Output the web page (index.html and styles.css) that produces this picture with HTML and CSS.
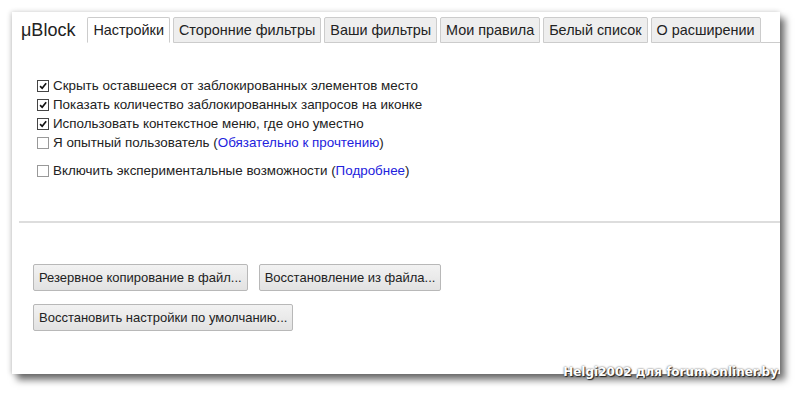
FILE: index.html
```html
<!DOCTYPE html>
<html lang="ru">
<head>
    <meta charset="UTF-8">
    <title>μBlock — Настройки</title>
    <link rel="stylesheet" href="styles.css">
</head>
<body>
    <div class="window">
        <div class="tabs">
            <span class="logo">μBlock</span>
            <span class="tab active">Настройки</span>
            <span class="tab">Сторонние фильтры</span>
            <span class="tab">Ваши фильтры</span>
            <span class="tab">Мои правила</span>
            <span class="tab">Белый список</span>
            <span class="tab">О расширении</span>
            <span class="tab-fill"></span>
        </div>

        <ul class="options">
            <li><span class="box checked"><svg viewBox="0 0 12 12"><path d="M2.5 6.2 L5 8.8 L9.8 2.6" /></svg></span>Скрыть оставшееся от заблокированных элементов место</li>
            <li><span class="box checked"><svg viewBox="0 0 12 12"><path d="M2.5 6.2 L5 8.8 L9.8 2.6" /></svg></span>Показать количество заблокированных запросов на иконке</li>
            <li><span class="box checked"><svg viewBox="0 0 12 12"><path d="M2.5 6.2 L5 8.8 L9.8 2.6" /></svg></span>Использовать контекстное меню, где оно уместно</li>
            <li><span class="box"></span>Я опытный пользователь (<a href="#">Обязательно к прочтению</a>)</li>
            <li class="spaced"><span class="box"></span>Включить экспериментальные возможности (<a href="#">Подробнее</a>)</li>
        </ul>

        <hr class="sep">

        <div class="buttons">
            <div class="btn-row">
                <button class="btn">Резервное копирование в файл...</button>
                <button class="btn">Восстановление из файла...</button>
            </div>
            <div class="btn-row">
                <button class="btn">Восстановить настройки по умолчанию...</button>
            </div>
        </div>

        <div class="watermark">Helgi2002 для forum.onliner.by</div>
    </div>
</body>
</html>
```

FILE: styles.css
```css
/* Окно настроек */
* {
    margin: 0;
    padding: 0;
    box-sizing: border-box;
}
html, body {
    height: 393px;
    overflow: hidden;
}
body {
    background: #fff;
    font-family: 'Liberation Sans', Arial, sans-serif;
    color: #222;
    padding: 12px 0 0 12px;
}
.window {
    position: relative;
    width: 768px;
    height: 362px;
    background: #fff;
    box-shadow: 5px 6px 7px rgba(0, 0, 0, 0.55), -1px 0 5px rgba(0, 0, 0, 0.2);
}

/* Вкладки */
.tabs {
    display: flex;
    align-items: flex-end;
    padding-top: 5px;
}
.logo {
    font-size: 18px;
    color: #222;
    padding: 0 12px 0 9px;
    line-height: 26px;
    height: 26px;
}
.tab {
    font-size: 14.4px;
    line-height: 24px;
    height: 26px;
    padding: 0 5px;
    margin-right: 3px;
    background: #eee;
    border: 1px solid #ccc;
    border-radius: 2px 2px 0 0;
    color: #222;
}
.tab.active {
    background: #fff;
    border-bottom-color: #fff;
}
.tab-fill {
    flex: 1;
    border-bottom: 1px solid #ccc;
    margin-left: -3px;
}

/* Опции */
.options {
    list-style: none;
    padding: 33px 0 0 25px;
    font-size: 13.4px;
    line-height: 19px;
}
.options li {
    display: flex;
    align-items: center;
}
.options li.spaced {
    margin-top: 9px;
}
.box {
    width: 12px;
    height: 12px;
    border: 1px solid #999;
    margin-right: 4px;
    background: #fff;
    display: inline-block;
}
.box.checked {
    border-color: #444;
}
.box svg {
    display: block;
    width: 10px;
    height: 10px;
    fill: none;
    stroke: #111;
    stroke-width: 2;
}
.options a {
    color: #2222dd;
    text-decoration: none;
}

.sep {
    border: none;
    border-top: 2px solid #ddd;
    margin: 41px 0 0 7px;
}

/* Кнопки */
.buttons {
    padding: 41px 0 0 21px;
}
.btn-row {
    display: flex;
    gap: 11px;
    margin-bottom: 13px;
}
.btn {
    font-family: 'Liberation Sans', Arial, sans-serif;
    font-size: 13px;
    color: #222;
    height: 27px;
    padding: 0 5px;
    background: linear-gradient(#f2f2f2, #e2e2e2);
    border: 1px solid #b8b8b8;
    border-radius: 2px;
}

.watermark {
    position: absolute;
    right: 2px;
    bottom: -5px;
    font-family: 'DejaVu Sans', Verdana, sans-serif;
    font-weight: bold;
    font-size: 12px;
    color: #fff;
    text-shadow: 1px 1px 1px #222, 0 0 2px #444;
}
```
